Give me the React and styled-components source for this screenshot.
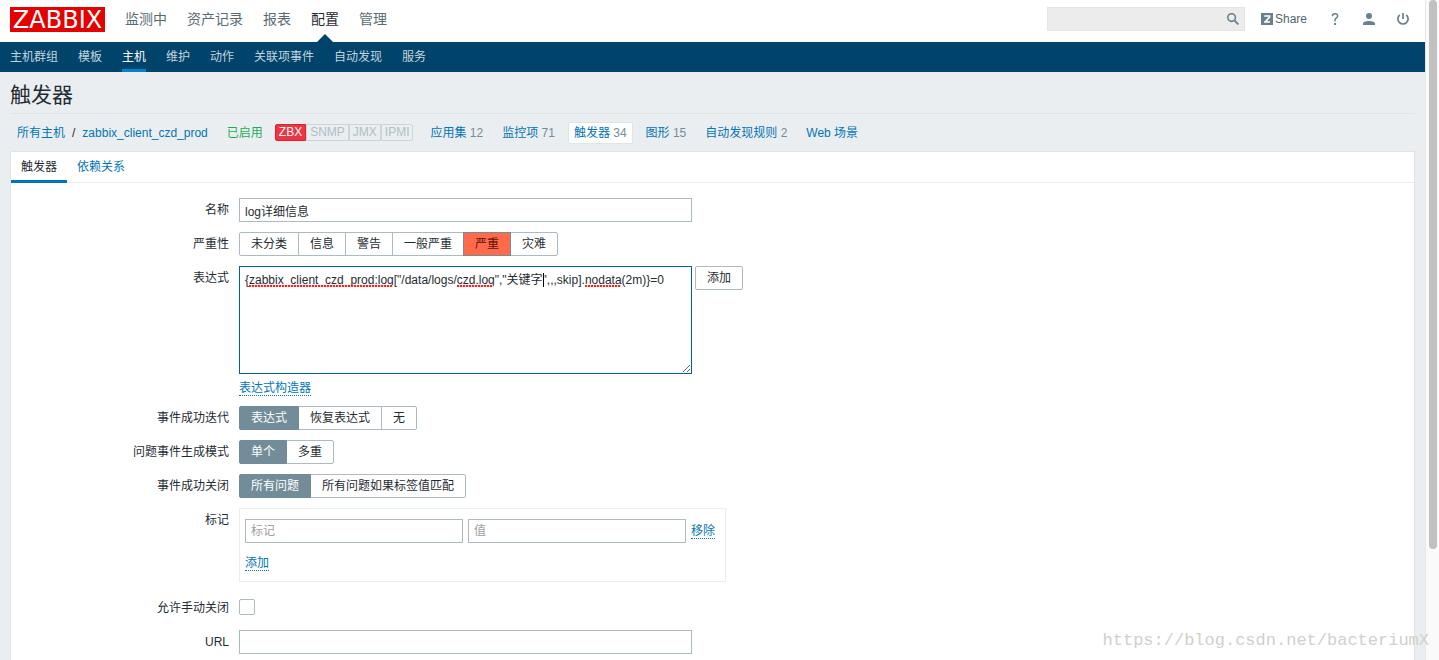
import React, { useState } from "react";
import styled, { createGlobalStyle } from "styled-components";

const Global = createGlobalStyle`
  * { box-sizing: border-box; }
  body {
    margin: 0;
    background: #ebeef0;
    color: #1f2c33;
    font: 12px/14px "Liberation Sans", "Noto Sans CJK SC", sans-serif;
  }
  button, input, textarea { font: inherit; color: inherit; }
  a { color: #0275b8; text-decoration: none; }
`;

const Page = styled.div`
  position: relative;
  display: flex;
  min-height: 100vh;
`;

const Main = styled.div`
  flex: 1;
  min-width: 0;
  display: flex;
  flex-direction: column;
`;

const ScrollTrack = styled.div`
  width: 14px;
  padding: 0 2px 0 3px;
  background: #fafafa;
  border-left: 1px solid #e8e8e8;
`;

const ScrollThumb = styled.div`
  height: 549px;
  border-radius: 4px;
  background: #c1c1c1;
`;

const TopBar = styled.header`
  display: flex;
  align-items: flex-start;
  height: 42px;
  padding: 7px 16px 0 10px;
  background: #fff;
`;

const Logo = styled.a`
  width: 95px;
  height: 25px;
  background: #e60000;
  color: #fff;
  font: 24px/26px "DejaVu Sans", sans-serif;
  text-align: center;
`;

const TopMenu = styled.nav`
  flex: 1;
  display: flex;
  gap: 20px;
  padding-left: 20px;
`;

const TopLink = styled.a`
  position: relative;
  height: 35px;
  font-size: 14px;
  line-height: 24px;
  color: ${(p) => (p.$active ? "#1f2c33" : "#5a6b75")};
  &::after {
    content: "";
    display: ${(p) => (p.$active ? "block" : "none")};
    position: absolute;
    left: 50%;
    bottom: 0;
    margin-left: -8px;
    border: 8px solid transparent;
    border-top: 0;
    border-bottom-color: #00446b;
  }
`;

const Tools = styled.div`
  display: flex;
  align-items: center;
  gap: 22px;
  height: 24px;
`;

const SearchForm = styled.form`
  position: relative;
  display: flex;
  width: 198px;
  height: 24px;
  margin-right: -6px;
`;

const SearchInput = styled.input`
  width: 100%;
  padding: 0 26px 0 5px;
  border: 1px solid #e4e4e4;
  background: #ececec;
`;

const SearchButton = styled.button`
  position: absolute;
  right: 0;
  top: 0;
  display: flex;
  align-items: center;
  justify-content: center;
  width: 24px;
  height: 24px;
  padding: 0;
  border: 0;
  background: none;
`;

const Tool = styled.a`
  display: flex;
  align-items: center;
  gap: 2px;
  color: #54666f;
`;

const SubMenu = styled.nav`
  display: flex;
  gap: 20px;
  height: 30px;
  padding: 0 10px;
  background: #00446b;
`;

const SubLink = styled.a`
  line-height: 30px;
  color: ${(p) => (p.$active ? "#fff" : "#c4d3dc")};
  box-shadow: ${(p) => (p.$active ? "inset 0 -3px #0283ce" : "none")};
`;

const Title = styled.h1`
  height: 41px;
  margin: 0 10px;
  font-size: 21px;
  font-weight: 400;
  line-height: 46px;
`;

const ObjectBar = styled.div`
  display: flex;
  align-items: center;
  gap: 7px;
  height: 38px;
  margin: 0 10px;
  padding-left: 1px;
  border-top: 1px solid #dfe4e7;
`;

const ObjectItem = styled.span`
  padding: 3px 5px;
  border: 1px solid ${(p) => (p.$active ? "#dfe4e7" : "transparent")};
  border-radius: 2px;
  background: ${(p) => (p.$active ? "#fff" : "transparent")};
  color: ${(p) => p.$color || "#768d99"};
  white-space: nowrap;
`;

const Slash = styled.span`
  margin: 0 7px;
  color: #1f2c33;
`;

const Badges = styled.span`
  display: flex;
  margin: 0 4px 0 -1px;
`;

const Badge = styled.span`
  height: 17px;
  padding: 0 3px;
  border: 1px solid ${(p) => (p.$on ? "#e01f2f" : "#ccd5d9")};
  background: ${(p) => (p.$on ? "#ed3544" : "transparent")};
  color: ${(p) => (p.$on ? "#fff" : "#afbfc7")};
  line-height: 15px;
  &:first-child { border-radius: 2px 0 0 2px; }
  &:last-child { border-radius: 0 2px 2px 0; }
`;

const Panel = styled.main`
  flex: 1;
  margin: 0 10px;
  padding-bottom: 6px;
  background: #fff;
  border: 1px solid #dfe4e7;
  border-bottom: 0;
`;

const Tabs = styled.nav`
  display: flex;
  height: 31px;
  border-bottom: 1px solid #ebeef0;
`;

const Tab = styled.a`
  height: 31px;
  padding: 0 10px;
  line-height: 30px;
  color: ${(p) => (p.$active ? "#1f2c33" : "#0275b8")};
  box-shadow: ${(p) => (p.$active ? "inset 0 -3px #0275b8" : "none")};
`;

const Form = styled.form`
  display: flex;
  flex-direction: column;
  gap: 10px;
  padding-top: 15px;
`;

const Row = styled.div`
  display: grid;
  grid-template-columns: 218px 1fr;
  column-gap: 10px;
  align-items: start;
`;

const RowLabel = styled.label`
  line-height: 24px;
  text-align: right;
`;

const Field = styled.div`
  display: flex;
  flex-wrap: wrap;
  align-items: flex-start;
  gap: 3px;
  min-height: 24px;
`;

const TextInput = styled.input`
  width: ${(p) => p.$width}px;
  height: 24px;
  padding: 0 5px;
  border: 1px solid #acbbc2;
  background: #fff;
  &::placeholder { color: #a0a0a0; opacity: 1; }
`;

const Segments = styled.div`
  display: flex;
`;

const SegmentInput = styled.input`
  position: absolute;
  opacity: 0;
  pointer-events: none;
`;

const Segment = styled.label`
  position: relative;
  height: 24px;
  padding: 0 11px;
  border: 1px solid #acbbc2;
  line-height: 22px;
  background: #fff;
  & + & { margin-left: -1px; }
  &:first-child { border-radius: 2px 0 0 2px; }
  &:last-child { border-radius: 0 2px 2px 0; }
  &:has(input:checked) {
    z-index: 1;
    background: ${(p) => (p.$high ? "#ff6a4b" : "#728d99")};
    border-color: #728d99;
    color: ${(p) => (p.$high ? "#5a1505" : "#fff")};
  }
`;

const Editor = styled.div`
  position: relative;
  width: 453px;
  height: 108px;
`;

const ExpressionArea = styled.textarea`
  display: block;
  width: 100%;
  height: 100%;
  padding: 6px 5px;
  border: 1px solid #00629a;
  outline: 0;
  background: #fff;
  resize: both;
`;

const SpellMark = styled.span`
  position: absolute;
  top: 19px;
  height: 2px;
  background: repeating-linear-gradient(90deg, #ff2020 0 2px, #ffc4c4 2px 3px);
  pointer-events: none;
`;

const Caret = styled.span`
  position: absolute;
  top: 7px;
  width: 1px;
  height: 14px;
  background: #000;
`;

const Button = styled.button`
  height: 24px;
  padding: 0 11px;
  border: 1px solid #acbbc2;
  border-radius: 2px;
  background: #fff;
`;

const LinkButton = styled.button`
  height: 16px;
  padding: 0;
  border: 0;
  border-bottom: 1px dotted #0275b8;
  background: none;
  color: #0275b8;
  line-height: 14px;
`;

const Break = styled.div`
  width: 100%;
  height: 0;
`;

const TagBox = styled.div`
  display: flex;
  flex-direction: column;
  align-items: flex-start;
  gap: 12px;
  width: 487px;
  height: 74px;
  margin-bottom: 4px;
  padding: 10px 5px;
  border: 1px solid #ebeef0;
`;

const TagRow = styled.div`
  display: flex;
  align-items: center;
  gap: 5px;
`;

const Check = styled.input`
  appearance: none;
  width: 16px;
  height: 16px;
  margin: 3px 0 0;
  border: 1px solid #acbbc2;
  border-radius: 2px;
  background: #fff;
  &:checked { background: #0275b8; }
`;

const Watermark = styled.div`
  position: absolute;
  right: 10px;
  bottom: 9px;
  color: #d0d0cc;
  font: 17px/20px "Liberation Mono", monospace;
  pointer-events: none;
`;

const SearchIcon = () => (
  <svg width="12" height="12" viewBox="0 0 12 12" fill="none" stroke="#69808d">
    <circle cx="4.6" cy="4.6" r="3.8" strokeWidth="1.6" />
    <path d="M7.4 7.4L11.4 11.4" strokeWidth="1.9" />
  </svg>
);

const ShareIcon = () => (
  <svg width="12" height="12" viewBox="0 0 12 12">
    <path d="M0 0h12v12H0z" fill="#69808d" />
    <path d="M3.2 3h5.4v1L4.6 8.6M3 9h6" fill="none" stroke="#fff" strokeWidth="1.7" />
  </svg>
);

const HelpIcon = () => (
  <svg width="12" height="12" viewBox="0 0 12 12" fill="none" stroke="#69808d" strokeWidth="1.5">
    <path d="M3.4 3.2C3.4 1.6 4.4.8 6 .8s2.7.9 2.7 2.2C8.7 4.9 6 5 6 7.2V8.4" />
    <path d="M6 10v2" strokeWidth="1.9" />
  </svg>
);

const UserIcon = () => (
  <svg width="12" height="12" viewBox="0 0 12 12" fill="#69808d">
    <circle cx="6" cy="3" r="3" />
    <path d="M0 12v-1.3C0 8.8 2.6 7.900 6 7.900s6 .9 6 2.800V12z" />
  </svg>
);

const PowerIcon = () => (
  <svg width="12" height="12" viewBox="0 0 12 12" fill="none" stroke="#69808d" strokeWidth="1.7">
    <path d="M2.7 2A5.100 5.100 0 1 0 9.300 2M6 0v6" />
  </svg>
);

const topItems = ["监测中", "资产记录", "报表", "配置", "管理"];
const subItems = ["主机群组", "模板", "主机", "维护", "动作", "关联项事件", "自动发现", "服务"];
const objectLinks = [
  ["应用集", 12],
  ["监控项", 71],
  ["触发器", 34],
  ["图形", 15],
  ["自动发现规则", 2],
  ["Web 场景"],
];
const misspelled = [
  { left: 10, width: 144 },
  { left: 218, width: 36 },
  { left: 346, width: 36 },
];

function SegmentRow({ label, name, options, initial, severity }) {
  const [value, setValue] = useState(initial);
  return (
    <Row role="radiogroup" aria-labelledby={name}>
      <RowLabel as="span" id={name}>{label}</RowLabel>
      <Field>
        <Segments>
          {options.map((option) => (
            <Segment key={option} $high={severity}>
              <SegmentInput
                type="radio"
                name={name}
                checked={value === option}
                onChange={() => setValue(option)}
              />
              {option}
            </Segment>
          ))}
        </Segments>
      </Field>
    </Row>
  );
}

export default function App() {
  return (
    <Page>
      <Global />
      <Main>
        <TopBar>
          <Logo href="#">ZABBIX</Logo>
          <TopMenu>
            {topItems.map((item) => (
              <TopLink key={item} href="#" $active={item === "配置"}>{item}</TopLink>
            ))}
          </TopMenu>
          <Tools>
            <SearchForm role="search">
              <SearchInput type="text" aria-label="搜索" />
              <SearchButton type="button" aria-label="搜索"><SearchIcon /></SearchButton>
            </SearchForm>
            <Tool href="#"><ShareIcon />Share</Tool>
            <Tool href="#" aria-label="帮助"><HelpIcon /></Tool>
            <Tool href="#" aria-label="用户"><UserIcon /></Tool>
            <Tool href="#" aria-label="退出"><PowerIcon /></Tool>
          </Tools>
        </TopBar>
        <SubMenu>
          {subItems.map((item) => (
            <SubLink key={item} href="#" $active={item === "主机"}>{item}</SubLink>
          ))}
        </SubMenu>
        <Title>触发器</Title>
        <ObjectBar>
          <ObjectItem>
            <a href="#">所有主机</a>
            <Slash>/</Slash>
            <a href="#">zabbix_client_czd_prod</a>
          </ObjectItem>
          <ObjectItem $color="#1cae57">已启用</ObjectItem>
          <Badges>
            <Badge $on>ZBX</Badge>
            <Badge>SNMP</Badge>
            <Badge>JMX</Badge>
            <Badge>IPMI</Badge>
          </Badges>
          {objectLinks.map(([text, count]) => (
            <ObjectItem key={text} $active={text === "触发器"}>
              <a href="#">{text}</a>{count && ` ${count}`}
            </ObjectItem>
          ))}
        </ObjectBar>
        <Panel>
          <Tabs>
            <Tab href="#" $active>触发器</Tab>
            <Tab href="#">依赖关系</Tab>
          </Tabs>
          <Form>
            <Row>
              <RowLabel htmlFor="name">名称</RowLabel>
              <Field><TextInput id="name" type="text" $width={453} defaultValue="log详细信息" /></Field>
            </Row>
            <SegmentRow
              label="严重性"
              name="severity"
              options={["未分类", "信息", "警告", "一般严重", "严重", "灾难"]}
              initial="严重"
              severity
            />
            <Row>
              <RowLabel htmlFor="expression">表达式</RowLabel>
              <Field>
                <Editor>
                  <ExpressionArea
                    id="expression"
                    spellCheck={false}
                    defaultValue={'{zabbix_client_czd_prod:log["/data/logs/czd.log","关键字",,,skip].nodata(2m)}=0'}
                  />
                  {misspelled.map((mark) => (
                    <SpellMark key={mark.left} style={mark} />
                  ))}
                  <Caret style={{ left: 304 }} />
                </Editor>
                <Button type="button">添加</Button>
                <Break />
                <LinkButton type="button">表达式构造器</LinkButton>
              </Field>
            </Row>
            <SegmentRow
              label="事件成功迭代"
              name="recovery"
              options={["表达式", "恢复表达式", "无"]}
              initial="表达式"
            />
            <SegmentRow
              label="问题事件生成模式"
              name="mode"
              options={["单个", "多重"]}
              initial="单个"
            />
            <SegmentRow
              label="事件成功关闭"
              name="close"
              options={["所有问题", "所有问题如果标签值匹配"]}
              initial="所有问题"
            />
            <Row>
              <RowLabel htmlFor="tag">标记</RowLabel>
              <TagBox>
                <TagRow>
                  <TextInput id="tag" type="text" $width={218} placeholder="标记" />
                  <TextInput type="text" $width={218} placeholder="值" aria-label="值" />
                  <LinkButton type="button">移除</LinkButton>
                </TagRow>
                <LinkButton type="button">添加</LinkButton>
              </TagBox>
            </Row>
            <Row>
              <RowLabel htmlFor="manual">允许手动关闭</RowLabel>
              <Field><Check id="manual" type="checkbox" /></Field>
            </Row>
            <Row>
              <RowLabel htmlFor="url">URL</RowLabel>
              <Field><TextInput id="url" type="text" $width={453} /></Field>
            </Row>
          </Form>
        </Panel>
      </Main>
      <ScrollTrack><ScrollThumb /></ScrollTrack>
      <Watermark>https://blog.csdn.net/bacteriumX</Watermark>
    </Page>
  );
}
